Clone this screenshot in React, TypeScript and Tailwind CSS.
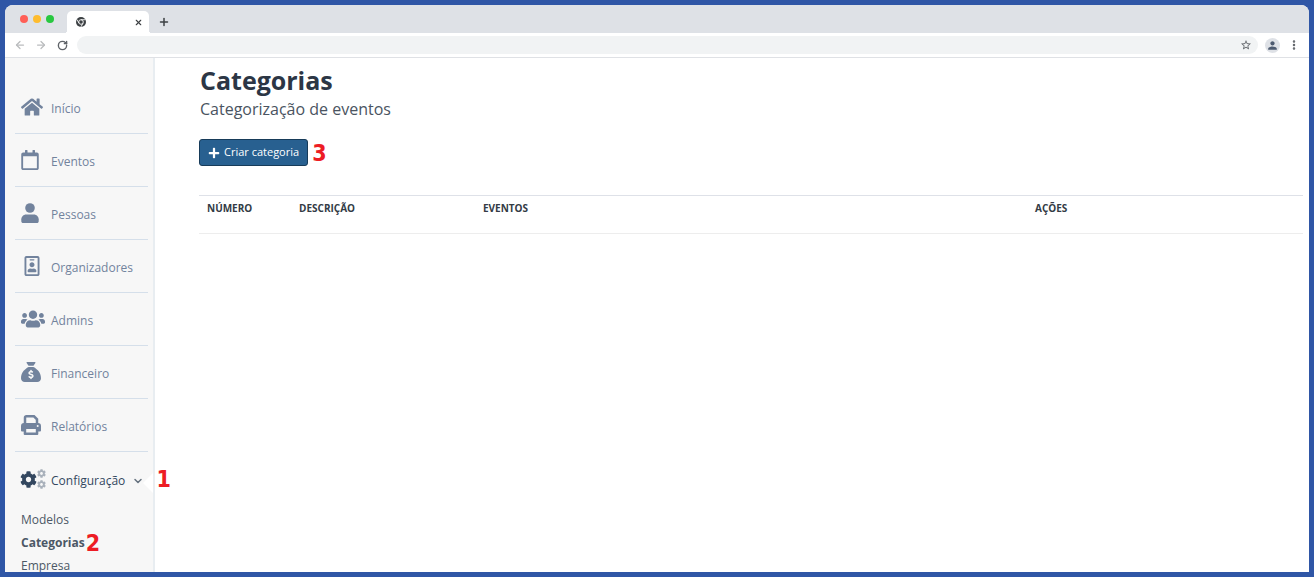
import type { ReactNode } from 'react';
import { ArrowLeft, ArrowRight, ChevronDown, EllipsisVertical, Plus, RotateCw, X } from 'lucide-react';
import { FaCog, FaHome, FaPlus, FaRegCalendar, FaRegIdBadge, FaUsers } from 'react-icons/fa';
import { FaSackDollar } from 'react-icons/fa6';
import { MdPerson, MdStarBorder } from 'react-icons/md';

function PersonIcon() {
  return (
    <svg width="18" height="20" viewBox="0 0 18 20" fill="currentColor" aria-hidden="true">
      <circle cx="9" cy="5" r="4.8" />
      <path d="M5.2 11.4h7.6c2.8 0 4.900 2.200 4.900 4.900v1.9c0 1-.8 1.8-1.8 1.8H2.1c-1 0-1.8-.8-1.8-1.8v-1.9c0-2.700 2.100-4.900 4.900-4.900z" />
    </svg>
  );
}

function PrinterIcon() {
  return (
    <svg width="20" height="20" viewBox="0 0 20 20" fill="none" aria-hidden="true">
      <path d="M4 9V2.700c0-.9.500-1.400 1.400-1.400h7.600l3 3V9" stroke="currentColor" strokeWidth="2.500" />
      <path
        fillRule="evenodd"
        fill="currentColor"
        d="M3 8h14a3 3 0 0 1 3 3v4.500a1 1 0 0 1-1 1h-1.700V19a1 1 0 0 1-1 1H3.700a1 1 0 0 1-1-1v-2.500H1a1 1 0 0 1-1-1V11a3 3 0 0 1 3-3zm2.200 6v3.500h9.600v-3.500zM16.700 10a1 1 0 1 0 0 2 1 1 0 0 0 0-2z"
      />
    </svg>
  );
}

const menu = [
  { label: 'Início', icon: <FaHome size={22} /> },
  { label: 'Eventos', icon: <FaRegCalendar size={20} className="-ml-px" /> },
  { label: 'Pessoas', icon: <PersonIcon /> },
  { label: 'Organizadores', icon: <FaRegIdBadge size={20} className="ml-px" /> },
  { label: 'Admins', icon: <FaUsers size={24} /> },
  { label: 'Financeiro', icon: <FaSackDollar size={20} /> },
  { label: 'Relatórios', icon: <PrinterIcon /> },
];

const columns = [
  { label: 'Número', width: 'w-1/12' },
  { label: 'Descrição', width: 'w-2/12' },
  { label: 'Eventos', width: 'w-6/12' },
  { label: 'Ações', width: 'w-3/12' },
];

function Step({ children, className = '' }: { children: ReactNode; className?: string }) {
  return (
    <span
      className={`font-['DejaVu_Sans_Condensed','DejaVu_Sans',sans-serif] text-[23px] leading-6 font-bold text-[#ed1c24] ${className}`}
    >
      {children}
    </span>
  );
}

function ChromeIcon() {
  return (
    <svg width="10" height="10" viewBox="0 0 24 24" fill="none" aria-hidden="true">
      <circle cx="12" cy="12" r="12" fill="#3c4043" />
      <circle cx="12" cy="12" r="5.5" fill="#3c4043" stroke="#fff" strokeWidth="2.2" />
      <path d="M12 6.5h10.5M7.2 14.7 2 5.8M16.8 14.8 11.6 24" stroke="#fff" strokeWidth="2" />
    </svg>
  );
}

function BrowserBar() {
  return (
    <header className="shrink-0 border-b border-[#dfe1e5] text-[#5f6368]">
      <div className="flex h-7 bg-[#dee1e6] pl-[15px]">
        <div className="flex items-center gap-[5px] pr-[13px]">
          <span className="size-2 rounded-full bg-[#ff5f57]" />
          <span className="size-2 rounded-full bg-[#febc2e]" />
          <span className="size-2 rounded-full bg-[#28c840]" />
        </div>
        <div className="relative mt-[6px] flex w-[82px] items-center justify-between rounded-t-[5px] bg-white pr-[6px] pl-[9px] before:absolute before:right-full before:bottom-0 before:size-[3px] before:bg-[radial-gradient(circle_at_0_0,#dee1e6_3px,#fff_3px)] after:absolute after:bottom-0 after:left-full after:size-[3px] after:bg-[radial-gradient(circle_at_100%_0,#dee1e6_3px,#fff_3px)]">
          <ChromeIcon />
          <button type="button" aria-label="Fechar aba" className="text-[#3c4043]">
            <X size={9} strokeWidth={3} />
          </button>
        </div>
        <button type="button" aria-label="Nova aba" className="mt-[6px] ml-[9px] text-[#3c4043]">
          <Plus size={12} strokeWidth={3} />
        </button>
      </div>
      <div className="flex h-6 items-center bg-white pr-[9px] pl-[9px]">
        <button type="button" aria-label="Voltar" className="text-[#babcbe]">
          <ArrowLeft size={12} strokeWidth={2.5} />
        </button>
        <button type="button" aria-label="Avançar" className="ml-[9px] text-[#babcbe]">
          <ArrowRight size={12} strokeWidth={2.5} />
        </button>
        <button type="button" aria-label="Recarregar" className="ml-[10px]">
          <RotateCw size={11} strokeWidth={3} />
        </button>
        <div className="ml-[9px] flex h-[18px] grow items-center rounded-full bg-[#f1f3f4] pr-[6px]">
          <input aria-label="Endereço" className="h-full min-w-0 grow bg-transparent px-3 text-[11px] outline-none" />
          <button type="button" aria-label="Favoritar">
            <MdStarBorder size={12} />
          </button>
        </div>
        <button
          type="button"
          aria-label="Perfil"
          className="ml-[7px] flex size-[15px] items-center justify-center rounded-full bg-[#dee1e6] text-[#4d5b70]"
        >
          <MdPerson size={13} />
        </button>
        <button type="button" aria-label="Mais" className="ml-2">
          <EllipsisVertical size={12} strokeWidth={3} />
        </button>
      </div>
    </header>
  );
}

function Sidebar() {
  return (
    <nav className="w-[150px] shrink-0 border-r-2 border-[#e8edf1] bg-[#f7f7f7] pt-[23px] pr-[5px] pl-[10px] text-[12px]">
      <ul>
        {menu.map(item => (
          <li key={item.label} className="border-b border-[#d5dfea]">
            <a href="#" className="flex h-[52px] items-center pl-[6px] text-[#72839d]">
              <span className="w-[30px]">{item.icon}</span>
              <span className="pt-1">{item.label}</span>
            </a>
          </li>
        ))}
        <li>
          <a href="#" className="relative flex h-[54px] items-center pl-[5px] text-[#33475f]">
            <span className="flex w-[31px] shrink-0 items-center">
              <FaCog size={17} />
              <span className="flex flex-col gap-[2px] text-[#a9b1bb]">
                <FaCog size={9} />
                <FaCog size={9} />
              </span>
            </span>
            <span className="pt-[3px]">Configuração</span>
            <ChevronDown size={12} strokeWidth={3} className="mt-[3px] ml-[7px] text-[#66727f]" />
            <span className="absolute top-[21px] -right-[5px] h-[20px] w-[10px] bg-white [clip-path:polygon(100%_0,100%_100%,0_50%)]" />
            <Step className="absolute top-[15px] -right-[23px]">1</Step>
          </a>
          <ul className="pt-[2px] pl-[6px] leading-[23px] text-[#4c5866]">
            <li>
              <a href="#">Modelos</a>
            </li>
            <li className="flex items-center gap-px">
              <a href="#" className="font-bold">
                Categorias
              </a>
              <Step className="-my-1">2</Step>
            </li>
            <li>
              <a href="#">Empresa</a>
            </li>
          </ul>
        </li>
      </ul>
    </nav>
  );
}

export default function App() {
  return (
    <div className="h-screen bg-[#2f56a6] p-[5px] font-['Open_Sans',sans-serif]">
      <div className="flex h-full flex-col overflow-hidden rounded-t-lg bg-white">
        <BrowserBar />
        <div className="flex min-h-0 grow">
          <Sidebar />
          <main className="min-w-0 grow pt-[5px] pr-[6px] pl-[44px]">
            <div className="pl-px">
              <h1 className="text-[25px] leading-[34px] font-bold text-[#2c3645]">Categorias</h1>
              <p className="text-[16px] leading-6 text-[#4a5461]">Categorização de eventos</p>
            </div>
            <div className="mt-[18px] flex items-center gap-1">
              <button
                type="button"
                className="flex h-[27px] items-center gap-1 rounded-[3px] border border-[#173b59] bg-[#286090] px-2 text-[11px] text-white"
              >
                <FaPlus size={12} />
                Criar categoria
              </button>
              <Step>3</Step>
            </div>
            <table className="mt-[29px] w-full table-fixed text-left text-[10px] leading-4 text-[#333b45]">
              <thead>
                <tr className="border-t border-b border-t-[#dee1e8] border-b-[#ededed]">
                  {columns.map(col => (
                    <th key={col.label} className={`${col.width} px-2 pt-1 pb-[17px] font-bold uppercase`}>
                      {col.label}
                    </th>
                  ))}
                </tr>
              </thead>
              <tbody />
            </table>
          </main>
        </div>
      </div>
    </div>
  );
}
